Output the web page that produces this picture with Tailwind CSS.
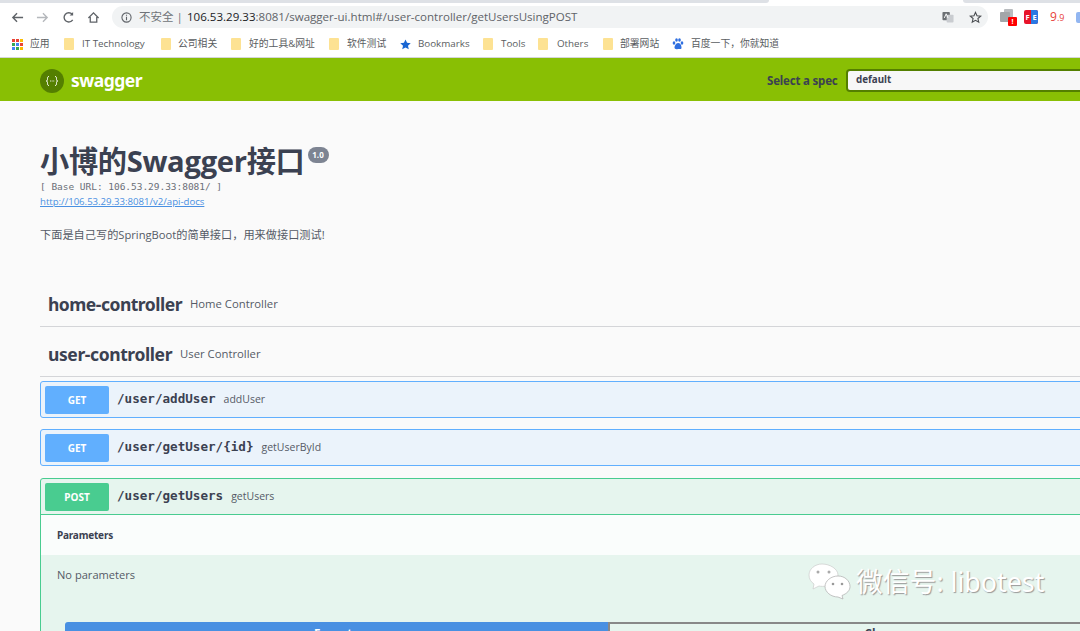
<!DOCTYPE html>
<html lang="en">
<head>
  <meta charset="UTF-8" />
  <title>Swagger UI</title>
  <script src="https://cdn.jsdelivr.net/npm/@tailwindcss/browser@4"></script>
</head>
<body class="w-[1080px] h-[631px] overflow-hidden relative bg-[#fafafa] font-['Open_Sans','Noto_Sans_CJK_SC',sans-serif] text-[#3b4151]">
  <!-- Tab strip -->
  <div class="h-[3px] flex bg-white">
    <div class="w-[769px] bg-[#dee1e6] rounded-br-[3px]"></div>
    <div class="flex-1"></div>
    <div class="w-[117px] bg-[#dee1e6] rounded-bl-[3px]"></div>
  </div>

  <!-- Toolbar -->
  <div class="h-[28px] bg-white flex items-center pl-[11px] whitespace-nowrap">
    <svg class="w-[13px] h-[13px] shrink-0" viewBox="0 0 14 14" fill="none" stroke="#5f6368" stroke-width="1.5"><path d="M13 7H2M6.500 2.500 2 7l4.500 4.500"/></svg>
    <svg class="w-[13px] h-[13px] ml-[12px] shrink-0" viewBox="0 0 14 14" fill="none" stroke="#b5b8bc" stroke-width="1.5"><path d="M1 7h11M7.500 2.500 12 7l-4.500 4.500"/></svg>
    <svg class="w-[13px] h-[13px] ml-[13px] shrink-0" viewBox="0 0 14 14" fill="none" stroke="#5f6368" stroke-width="1.500"><path d="M11.500 9.500A5 5 0 1 1 11 3.500"/><path d="M12 1v3.800H8.200" fill="#5f6368" stroke="none"/></svg>
    <svg class="w-[13px] h-[13px] ml-[12px] shrink-0" viewBox="0 0 14 14" fill="none" stroke="#5f6368" stroke-width="1.400"><path d="M1.500 7.500 7 2l5.500 5.500M3.500 6.500V12h7V6.500"/></svg>
    <div class="ml-[12px] w-[876px] shrink-0 h-[22px] rounded-full bg-[#f1f3f4] flex items-center pl-[9px] text-[11.500px] text-[#5f6368]">
      <svg class="w-[11px] h-[11px] shrink-0" viewBox="0 0 12 12" fill="none" stroke="#5f6368" stroke-width="1.200"><circle cx="6" cy="6" r="5"/><path d="M6 5.200V9M6 3v1.200"/></svg>
      <span class="ml-[7px] w-[48px] shrink-0 text-[#6f7378]">不安全 |</span>
      <span class="w-[391px] shrink-0 text-[11.560px]"><span class="text-[#202124]">106.53.29.33</span>:8081/swagger-ui.html#/user-controller/getUsersUsingPOST</span>
      <svg class="w-[12px] h-[12px] ml-[364px] shrink-0" viewBox="0 0 13 13"><rect x="0.500" y="1" width="8" height="9" rx="1" fill="#6b6f73"/><rect x="5" y="4" width="7.500" height="8.500" rx="1" fill="#c9ccd0"/><path d="M2.500 7.500 4.500 3l2 4.500" stroke="#fff" fill="none"/></svg>
      <svg class="w-[13px] h-[13px] ml-[15px] shrink-0" viewBox="0 0 14 14" fill="none" stroke="#4a4d51" stroke-width="1.200"><path d="M7 1.500 8.600 5.200l4 .3-3 2.600.9 3.900L7 10l-3.500 2 .9-3.900-3-2.600 4-.3z"/></svg>
    </div>
    <div class="ml-[12px] w-[17px] h-[17px] relative shrink-0">
      <div class="absolute left-[4px] top-0 w-[9px] h-[9px] bg-[#b9bcbf] rounded-[1px]"></div>
      <div class="absolute left-0 top-[3px] w-[10px] h-[10px] bg-[#a3a6a9] rounded-[1px]"></div>
      <span class="absolute left-[8px] top-[8px] w-[9px] h-[9px] bg-[#f00] rounded-[1px] text-white text-[7px] leading-[9px] text-center font-bold">!</span>
    </div>
    <div class="ml-[7px] w-[14px] h-[14px] shrink-0 rounded-[2px] bg-[#e8132a] flex text-white text-[7.500px] leading-[14px] font-bold overflow-hidden">
      <span class="w-[7px] text-center">F</span><span class="w-[7px] bg-[#2a78e4] text-center">E</span>
    </div>
    <span class="ml-[12px] w-[26px] shrink-0 text-[12px] text-[#e8433a]">9<span class="text-[9px]">.9</span></span>
    <div class="w-[6px] h-[11px] shrink-0 bg-[#4a86e8]/60 rounded-l-[2px]"></div>
  </div>

  <!-- Bookmarks bar -->
  <div class="h-[27px] bg-white border-b border-[#d5d6d8] flex items-center pl-[12px] text-[9.800px] text-[#5a5d61] whitespace-nowrap">
    <svg class="w-[11px] h-[11px] shrink-0" viewBox="0 0 11 11">
      <rect x="0" y="0" width="3" height="3" fill="#ea4335"/><rect x="4" y="0" width="3" height="3" fill="#ea4335"/><rect x="8" y="0" width="3" height="3" fill="#fbbc05"/>
      <rect x="0" y="4" width="3" height="3" fill="#34a853"/><rect x="4" y="4" width="3" height="3" fill="#4285f4"/><rect x="8" y="4" width="3" height="3" fill="#ea4335"/>
      <rect x="0" y="8" width="3" height="3" fill="#4285f4"/><rect x="4" y="8" width="3" height="3" fill="#34a853"/><rect x="8" y="8" width="3" height="3" fill="#fbbc05"/>
    </svg>
    <span class="ml-[7px] w-[34px] shrink-0">应用</span>
    <div class="w-[10px] h-[12px] shrink-0 rounded-[1px] bg-[#fde293]"></div>
    <span class="ml-[8px] w-[79px] shrink-0">IT Technology</span>
    <div class="w-[10px] h-[12px] shrink-0 rounded-[1px] bg-[#fde293]"></div>
    <span class="ml-[7px] w-[53px] shrink-0">公司相关</span>
    <div class="w-[10px] h-[12px] shrink-0 rounded-[1px] bg-[#fde293]"></div>
    <span class="ml-[8px] w-[80px] shrink-0">好的工具&amp;网址</span>
    <div class="w-[10px] h-[12px] shrink-0 rounded-[1px] bg-[#fde293]"></div>
    <span class="ml-[8px] w-[53px] shrink-0">软件测试</span>
    <svg class="w-[11px] h-[11px] shrink-0" viewBox="0 0 12 12" fill="#1a66d2"><path d="M6 .500 7.700 4.200l4 .4-3 2.700.9 4L6 9.300l-3.600 2 .9-4-3-2.700 4-.4z"/></svg>
    <span class="ml-[7px] w-[65px] shrink-0">Bookmarks</span>
    <div class="w-[10px] h-[12px] shrink-0 rounded-[1px] bg-[#fde293]"></div>
    <span class="ml-[8px] w-[37px] shrink-0">Tools</span>
    <div class="w-[10px] h-[12px] shrink-0 rounded-[1px] bg-[#fde293]"></div>
    <span class="ml-[9px] w-[46px] shrink-0">Others</span>
    <div class="w-[10px] h-[12px] shrink-0 rounded-[1px] bg-[#fde293]"></div>
    <span class="ml-[7px] w-[52px] shrink-0">部署网站</span>
    <svg class="w-[12px] h-[12px] shrink-0" viewBox="0 0 12 12" fill="#2f6fe0"><ellipse cx="2" cy="5" rx="1.300" ry="1.700"/><ellipse cx="4.500" cy="2" rx="1.300" ry="1.800"/><ellipse cx="7.500" cy="2" rx="1.300" ry="1.800"/><ellipse cx="10" cy="5" rx="1.300" ry="1.700"/><path d="M6 5C4 5 2.500 8 2.500 9.500S4 11.500 6 11s3.500 1 3.500-1.500S8 5 6 5z"/></svg>
    <span class="ml-[7px]">百度一下，你就知道</span>
  </div>

  <!-- Swagger topbar -->
  <div class="h-[43px] pt-[2px] bg-[#89bf04] flex items-center pl-[40px] whitespace-nowrap font-['Noto_Sans',sans-serif]">
    <svg class="w-[24px] h-[24px] shrink-0" viewBox="0 0 24 24">
      <circle cx="12" cy="12" r="12" fill="#547f00"/>
      <path d="M9 7.500c-1.500 0-1.500 1-1.500 2.200 0 1.400-.3 2.300-1.300 2.300 1 0 1.300.9 1.300 2.300 0 1.200 0 2.200 1.500 2.200M15 7.500c1.500 0 1.500 1 1.500 2.200 0 1.400.3 2.300 1.300 2.300-1 0-1.300.9-1.300 2.300 0 1.200 0 2.200-1.500 2.200" fill="none" stroke="#fff" stroke-width="1"/>
      <path d="M10 12h.8M11.700 12h.8M13.400 12h.8" stroke="#fff" stroke-width="1"/>
    </svg>
    <span class="ml-[7px] w-[696px] shrink-0 text-[17.500px] font-bold text-white tracking-[-0.5px]">swagger</span>
    <span class="w-[79px] shrink-0 text-[11.500px] font-bold tracking-[-0.2px]">Select a spec</span>
    <div class="w-[250px] h-[23px] shrink-0 bg-[#f7f7f7] border-2 border-[#547f00] rounded-[4px] flex items-center pl-[8px] text-[9.800px] font-bold">default</div>
  </div>

  <!-- Main -->
  <div class="pl-[40px]">
    <div class="h-[124px] pt-[40px]">
      <div class="flex items-start h-[40px]">
        <h1 class="text-[29.200px] leading-[40px] font-bold whitespace-nowrap tracking-[-0.3px]">小博的Swagger接口</h1>
        <span class="ml-[3px] mt-[6px] w-[21px] h-[16px] rounded-full bg-[#7d8492] text-white text-[8px] leading-[16px] text-center font-bold">1.0</span>
      </div>
      <div class="text-[9.500px] leading-[12px] font-['DejaVu_Sans_Mono',monospace] text-[#6b6f78] whitespace-nowrap tracking-[-0.03px]">[ Base URL: 106.53.29.33:8081/ ]</div>
      <a href="#" class="block text-[9.600px] leading-[14px] mt-[2px] text-[#4990e2] underline">http://106.53.29.33:8081/v2/api-docs</a>
      <p class="text-[11.200px] leading-[16px] mt-[18px] text-[#555a66]">下面是自己写的SpringBoot的简单接口，用来做接口测试!</p>
    </div>
    <div class="mt-[33px]">
      <div class="h-[50px] border-b border-[#d4d5d8] pl-[8px] pt-[6px] flex items-center mt-[52px]">
        <span class="text-[17.500px] font-bold font-['Noto_Sans',sans-serif] tracking-[-0.5px]">home-controller</span>
        <span class="ml-[8px] text-[11.300px] text-[#555a66]">Home Controller</span>
      </div>
      <div class="h-[50px] border-b border-[#d4d5d8] pl-[8px] pt-[6px] flex items-center">
        <span class="text-[17.500px] font-bold font-['Noto_Sans',sans-serif] tracking-[-0.4px]">user-controller</span>
        <span class="ml-[8px] text-[11.300px] text-[#555a66]">User Controller</span>
      </div>
    </div>

    <!-- Operations -->
    <div class="mt-[4px] -mr-[10px] h-[37px] bg-[#ebf3fb] border border-[#61affe] rounded-[3px] flex items-center pl-[4px]">
      <span class="w-[64px] h-[28px] bg-[#61affe] rounded-[2px] text-white text-[10px] font-bold leading-[28px] text-center font-['Noto_Sans',sans-serif]">GET</span>
      <span class="ml-[8px] text-[12.600px] font-bold font-['DejaVu_Sans_Mono',monospace]">/user/addUser</span>
      <span class="ml-[8px] text-[10.500px] text-[#555a66]">addUser</span>
    </div>
    <div class="mt-[11px] -mr-[10px] h-[37px] bg-[#ebf3fb] border border-[#61affe] rounded-[3px] flex items-center pl-[4px]">
      <span class="w-[64px] h-[28px] bg-[#61affe] rounded-[2px] text-white text-[10px] font-bold leading-[28px] text-center font-['Noto_Sans',sans-serif]">GET</span>
      <span class="ml-[8px] text-[12.600px] font-bold font-['DejaVu_Sans_Mono',monospace]">/user/getUser/{id}</span>
      <span class="ml-[8px] text-[10.500px] text-[#555a66]">getUserById</span>
    </div>
    <div class="mt-[12px] -mr-[10px] bg-[#e6f5ee] border border-[#49cc90] rounded-[3px]">
      <div class="h-[36px] border-b border-[#49cc90] flex items-center pl-[4px]">
        <span class="w-[64px] h-[28px] bg-[#49cc90] rounded-[2px] text-white text-[10px] font-bold leading-[28px] text-center font-['Noto_Sans',sans-serif]">POST</span>
        <span class="ml-[8px] text-[12.600px] font-bold font-['DejaVu_Sans_Mono',monospace]">/user/getUsers</span>
        <span class="ml-[8px] text-[10.500px] text-[#555a66]">getUsers</span>
      </div>
      <div class="h-[40px] bg-white/80 flex items-center pl-[16px] text-[10px] font-bold font-['Noto_Sans',sans-serif] tracking-[-0.2px]">Parameters</div>
      <div class="h-[67px] pl-[16px] pt-[12px] text-[11.100px] leading-[16px] text-[#555a66]">No parameters</div>
      <div class="flex ml-[24px] h-[40px]">
        <div class="w-[543px] shrink-0 bg-[#4990e2] rounded-l-[3px] text-white text-[11.500px] font-bold text-center pt-[3px]">Execute</div>
        <div class="w-[543px] shrink-0 border-2 border-[#888] border-b-0 text-[11.500px] font-bold text-center pt-[1px]">Clear</div>
      </div>
    </div>
  </div>

  <!-- WeChat watermark over the page -->
  <div class="absolute left-[808px] top-[563px] flex items-center">
    <svg class="w-[44px] h-[38px]" viewBox="0 0 44 38">
      <path d="M14 1C7 1 1 6 1 12c0 4 2 7 5 9l-1 5 6-3c2 .5 5 .5 7 0 6-2 12-5 12-11C30 6 22 1 14 1z" fill="#fff" stroke="#ccc" stroke-width=".7"/>
      <circle cx="10" cy="9" r="1.500" fill="#aaa"/><circle cx="21" cy="9" r="1.500" fill="#aaa"/>
      <path d="M30 13c-7 0-13 5-13 10.500S23 34 30 34l5 2-1-3.500c5-2 8-5 8-9C42 18 37 13 30 13z" fill="#fff" stroke="#aaa" stroke-width=".7"/>
      <circle cx="25" cy="21" r="1.300" fill="#999"/><circle cx="34" cy="21" r="1.300" fill="#999"/>
    </svg>
    <span class="ml-[4px] text-[26.800px] leading-[36px] text-white whitespace-nowrap font-['Noto_Sans','Noto_Sans_CJK_SC',sans-serif] [text-shadow:1px_1px_1px_#999]">微信号: libotest</span>
  </div>
</body>
</html>
